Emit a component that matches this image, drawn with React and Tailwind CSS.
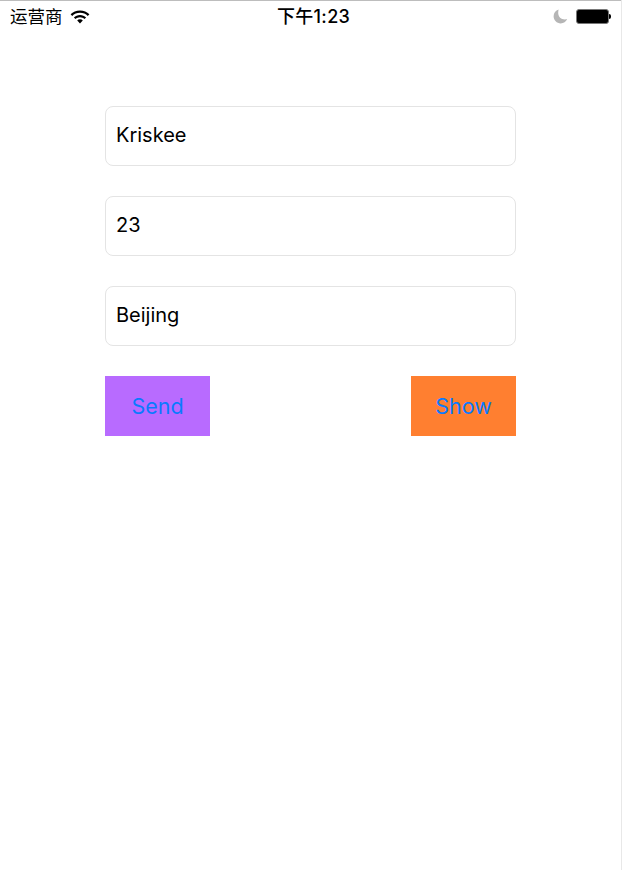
import React from "react";

const fields = ["Kriskee", "23", "Beijing"];

const WifiIcon = () => (
  <svg width="20" height="14" viewBox="0 0 20 14" fill="#000">
    <path d="M10 0.5C6.2 0.5 3 1.9 0.6 4.2L2.2 5.9C4.2 4 6.9 2.8 10 2.8C13.1 2.8 15.8 4 17.8 5.9L19.4 4.2C17 1.9 13.8 0.5 10 0.5Z" />
    <path d="M10 5C7.6 5 5.5 5.9 3.9 7.4L5.5 9.1C6.7 8 8.2 7.3 10 7.3C11.8 7.3 13.3 8 14.5 9.1L16.1 7.4C14.5 5.9 12.4 5 10 5Z" />
    <path d="M10 9.3C8.9 9.3 7.9 9.7 7.2 10.4L10 13.4L12.8 10.4C12.1 9.7 11.1 9.3 10 9.3Z" />
  </svg>
);

const MoonIcon = () => (
  <svg width="15" height="15" viewBox="0 0 15 15" fill="#b5b5b5">
    <path d="M5.6 0.6C2.6 1.5 0.6 4.2 0.6 7.3C0.6 11.2 3.8 14.4 7.7 14.4C10.6 14.4 13.1 12.7 14.2 10.1C13.5 10.4 12.7 10.5 11.9 10.5C8.2 10.5 5.2 7.7 5.2 4C5.2 2.8 5.3 1.7 5.6 0.6Z" />
  </svg>
);

const BatteryIcon = () => (
  <div className="flex items-center">
    <div className="w-[33px] h-[15px] rounded-[3px] bg-black border border-[#777777]" />
    <div className="w-[2px] h-[5px] bg-black rounded-r-[2px]" />
  </div>
);

const StatusBar = () => (
  <div className="relative flex items-center justify-between h-[32px] pl-[10px] pr-[10px] border-t border-[#bdbdbd] text-black">
    <div className="flex items-center gap-[7px]">
      <span className="text-[17.5px] leading-[22px]">运营商</span>
      <WifiIcon />
    </div>
    <span className="absolute left-[277px] top-[5px] text-[18px] leading-[22px] font-medium tracking-[0.3px]">下午1:23</span>
    <div className="flex items-center gap-[8px]">
      <MoonIcon />
      <BatteryIcon />
    </div>
  </div>
);

const App = () => {
  return (
    <div
      className="w-[625px] h-[870px] bg-white overflow-hidden"
      style={{ fontFamily: 'Inter, "Noto Sans CJK SC", sans-serif' }}
    >
      <div className="w-[622px] h-full border-r border-[#e8e8e8]">
        <StatusBar />
        <div className="flex flex-col gap-[30px] w-[411px] ml-[105px] mt-[74px]">
          {fields.map((value) => (
            <input
              key={value}
              defaultValue={value}
              className="h-[60px] px-[10px] pb-[2px] rounded-[8px] border border-[#e4e4e4] text-[20px] text-black outline-none"
            />
          ))}
          <div className="flex justify-between">
            <button className="w-[105px] h-[60px] pt-[1px] bg-[#b86bff] text-[#0a7aff] text-[21.5px]">Send</button>
            <button className="w-[105px] h-[60px] pt-[1px] bg-[#ff7f30] text-[#0a7aff] text-[21.5px]">Show</button>
          </div>
        </div>
      </div>
    </div>
  );
};

export default App;
